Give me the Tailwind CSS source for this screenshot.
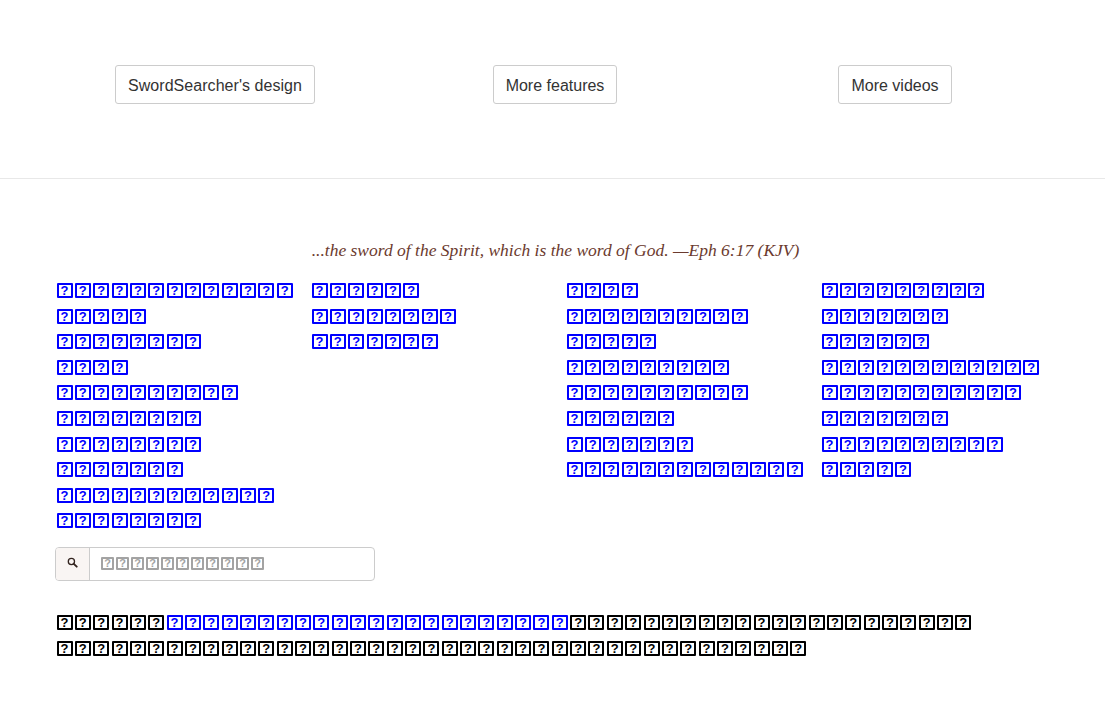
<!DOCTYPE html>
<html lang="en">
<head>
<meta charset="utf-8">
<title>SwordSearcher</title>
<script src="https://cdn.jsdelivr.net/npm/@tailwindcss/browser@4"></script>
</head>
<body class="bg-white font-['Liberation_Sans',sans-serif] text-[#333]">
<section class="h-[178px] pt-[65px] pl-[45px]">
  <div class="grid w-[1020px] grid-cols-3 justify-items-center">
    <a href="#" class="flex h-[39px] items-center rounded-[3px] border border-[#ccc] px-3 pt-[2px] text-[16px] tracking-[0.05px]">SwordSearcher's design</a>
    <a href="#" class="flex h-[39px] items-center rounded-[3px] border border-[#ccc] px-3 pt-[2px] text-[16px]">More features</a>
    <a href="#" class="flex h-[39px] items-center rounded-[3px] border border-[#ccc] px-3 pt-[2px] text-[16px]">More videos</a>
  </div>
</section>
<hr class="border-t border-[#e8e8e8]">
<main class="pl-[56.5px] [&_span]:flex [&_span]:h-[15px] [&_span]:w-[16px] [&_span]:items-center [&_span]:justify-center [&_span]:rounded-[1px] [&_span]:border-2 [&_span]:border-current [&_span]:text-[13px] [&_span]:leading-none [&_span]:font-bold">
  <p class="mt-[59px] h-[24px] w-[998px] text-center font-['Liberation_Serif',serif] text-[17.5px] leading-[24px] text-[#6b3a2e] italic">...the sword of the Spirit, which is the word of God. —Eph 6:17 (KJV)</p>
  <div class="mt-[15.7px] grid w-[1020px] grid-cols-4 text-[#0000ff] [&_a]:flex [&_a]:h-[25.6px] [&_a]:items-center [&_a]:gap-[2.35px]">
    <div>
      <a href="#"><span>?</span><span>?</span><span>?</span><span>?</span><span>?</span><span>?</span><span>?</span><span>?</span><span>?</span><span>?</span><span>?</span><span>?</span><span>?</span></a>
      <a href="#"><span>?</span><span>?</span><span>?</span><span>?</span><span>?</span></a>
      <a href="#"><span>?</span><span>?</span><span>?</span><span>?</span><span>?</span><span>?</span><span>?</span><span>?</span></a>
      <a href="#"><span>?</span><span>?</span><span>?</span><span>?</span></a>
      <a href="#"><span>?</span><span>?</span><span>?</span><span>?</span><span>?</span><span>?</span><span>?</span><span>?</span><span>?</span><span>?</span></a>
      <a href="#"><span>?</span><span>?</span><span>?</span><span>?</span><span>?</span><span>?</span><span>?</span><span>?</span></a>
      <a href="#"><span>?</span><span>?</span><span>?</span><span>?</span><span>?</span><span>?</span><span>?</span><span>?</span></a>
      <a href="#"><span>?</span><span>?</span><span>?</span><span>?</span><span>?</span><span>?</span><span>?</span></a>
      <a href="#"><span>?</span><span>?</span><span>?</span><span>?</span><span>?</span><span>?</span><span>?</span><span>?</span><span>?</span><span>?</span><span>?</span><span>?</span></a>
      <a href="#"><span>?</span><span>?</span><span>?</span><span>?</span><span>?</span><span>?</span><span>?</span><span>?</span></a>
    </div>
    <div>
      <a href="#"><span>?</span><span>?</span><span>?</span><span>?</span><span>?</span><span>?</span></a>
      <a href="#"><span>?</span><span>?</span><span>?</span><span>?</span><span>?</span><span>?</span><span>?</span><span>?</span></a>
      <a href="#"><span>?</span><span>?</span><span>?</span><span>?</span><span>?</span><span>?</span><span>?</span></a>
    </div>
    <div>
      <a href="#"><span>?</span><span>?</span><span>?</span><span>?</span></a>
      <a href="#"><span>?</span><span>?</span><span>?</span><span>?</span><span>?</span><span>?</span><span>?</span><span>?</span><span>?</span><span>?</span></a>
      <a href="#"><span>?</span><span>?</span><span>?</span><span>?</span><span>?</span></a>
      <a href="#"><span>?</span><span>?</span><span>?</span><span>?</span><span>?</span><span>?</span><span>?</span><span>?</span><span>?</span></a>
      <a href="#"><span>?</span><span>?</span><span>?</span><span>?</span><span>?</span><span>?</span><span>?</span><span>?</span><span>?</span><span>?</span></a>
      <a href="#"><span>?</span><span>?</span><span>?</span><span>?</span><span>?</span><span>?</span></a>
      <a href="#"><span>?</span><span>?</span><span>?</span><span>?</span><span>?</span><span>?</span><span>?</span></a>
      <a href="#"><span>?</span><span>?</span><span>?</span><span>?</span><span>?</span><span>?</span><span>?</span><span>?</span><span>?</span><span>?</span><span>?</span><span>?</span><span>?</span></a>
    </div>
    <div>
      <a href="#"><span>?</span><span>?</span><span>?</span><span>?</span><span>?</span><span>?</span><span>?</span><span>?</span><span>?</span></a>
      <a href="#"><span>?</span><span>?</span><span>?</span><span>?</span><span>?</span><span>?</span><span>?</span></a>
      <a href="#"><span>?</span><span>?</span><span>?</span><span>?</span><span>?</span><span>?</span></a>
      <a href="#"><span>?</span><span>?</span><span>?</span><span>?</span><span>?</span><span>?</span><span>?</span><span>?</span><span>?</span><span>?</span><span>?</span><span>?</span></a>
      <a href="#"><span>?</span><span>?</span><span>?</span><span>?</span><span>?</span><span>?</span><span>?</span><span>?</span><span>?</span><span>?</span><span>?</span></a>
      <a href="#"><span>?</span><span>?</span><span>?</span><span>?</span><span>?</span><span>?</span><span>?</span></a>
      <a href="#"><span>?</span><span>?</span><span>?</span><span>?</span><span>?</span><span>?</span><span>?</span><span>?</span><span>?</span><span>?</span></a>
      <a href="#"><span>?</span><span>?</span><span>?</span><span>?</span><span>?</span></a>
    </div>
  </div>
  <form class="mt-[13px] -ml-[1.5px] flex h-[34px] w-[320px] rounded-[4px] border border-[#ccc]">
    <div class="flex w-[34px] items-center justify-center rounded-l-[3px] border-r border-[#ccc] bg-[#f9f5f3]">
      <svg viewBox="0 0 12 12" class="mb-[2px] h-[11px] w-[11px] fill-none stroke-[#33241f]" aria-hidden="true"><circle cx="4.8" cy="4.8" r="3.4" stroke-width="1.4"/><path d="M7.4 7.4 10.6 10.6" stroke-width="2" stroke-linecap="round"/></svg>
    </div>
    <div class="flex items-center gap-[2px] pl-[11px] text-[#a3a3a3] [&_span]:!h-[13px] [&_span]:!w-[13px] [&_span]:!text-[11px]">
      <span>?</span><span>?</span><span>?</span><span>?</span><span>?</span><span>?</span><span>?</span><span>?</span><span>?</span><span>?</span><span>?</span>
    </div>
  </form>
  <div class="mt-[29px] text-black [&>p]:flex [&>p]:h-[26px] [&>p]:items-center [&>p]:gap-[2.35px]">
    <p><span>?</span><span>?</span><span>?</span><span>?</span><span>?</span><span>?</span><a href="#" class="flex gap-[2.35px] text-[#0000ff]"><span>?</span><span>?</span><span>?</span><span>?</span><span>?</span><span>?</span><span>?</span><span>?</span><span>?</span><span>?</span><span>?</span><span>?</span><span>?</span><span>?</span><span>?</span><span>?</span><span>?</span><span>?</span><span>?</span><span>?</span><span>?</span><span>?</span></a><span>?</span><span>?</span><span>?</span><span>?</span><span>?</span><span>?</span><span>?</span><span>?</span><span>?</span><span>?</span><span>?</span><span>?</span><span>?</span><span>?</span><span>?</span><span>?</span><span>?</span><span>?</span><span>?</span><span>?</span><span>?</span><span>?</span></p>
    <p><span>?</span><span>?</span><span>?</span><span>?</span><span>?</span><span>?</span><span>?</span><span>?</span><span>?</span><span>?</span><span>?</span><span>?</span><span>?</span><span>?</span><span>?</span><span>?</span><span>?</span><span>?</span><span>?</span><span>?</span><span>?</span><span>?</span><span>?</span><span>?</span><span>?</span><span>?</span><span>?</span><span>?</span><span>?</span><span>?</span><span>?</span><span>?</span><span>?</span><span>?</span><span>?</span><span>?</span><span>?</span><span>?</span><span>?</span><span>?</span><span>?</span></p>
  </div>
</main>
</body>
</html>
